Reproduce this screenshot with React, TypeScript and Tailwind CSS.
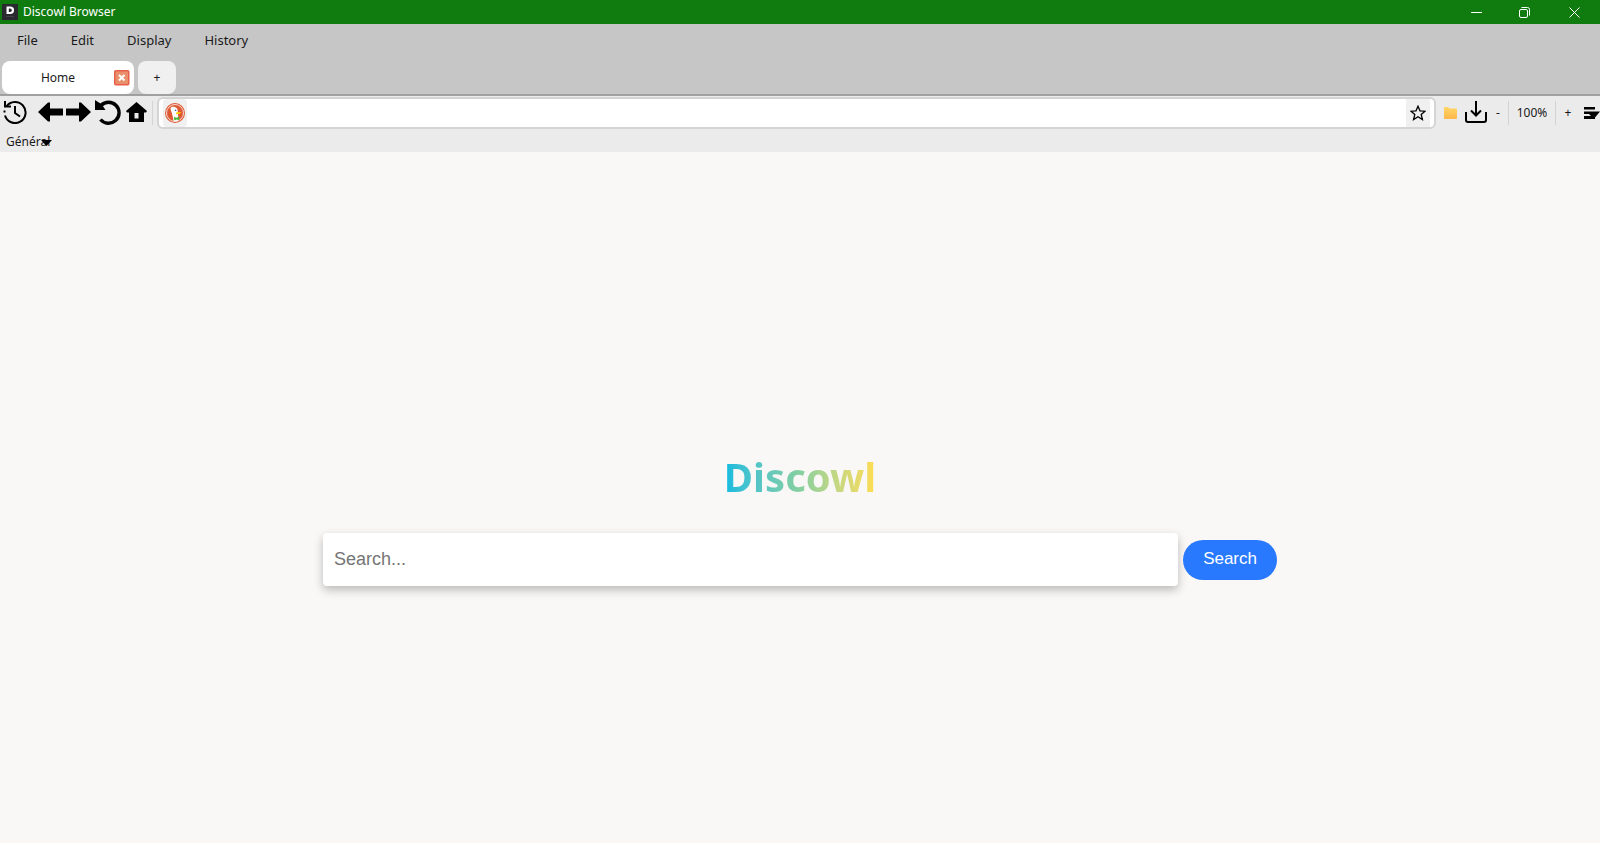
import type { ReactNode } from "react";

const menus = ["File", "Edit", "Display", "History"];

function IconButton({ label, className = "", children }: { label: string; className?: string; children: ReactNode }) {
  return (
    <button type="button" aria-label={label} title={label} className={`flex shrink-0 items-center justify-center ${className}`}>
      {children}
    </button>
  );
}

function AppLogo() {
  return (
    <svg width="16" height="16" viewBox="0 0 16 16" aria-hidden="true">
      <rect width="16" height="16" fill="#2b2930" />
      <path d="M4.500 2.500h3.800a3.600 3.600 0 0 1 0 7.500H4.500zM6.800 4.500v3.500h1.300a1.700 1.700 0 0 0 0-3.500z" fill="#fff" fillRule="evenodd" />
      <path d="M4 12.500h8" stroke="#45424a" />
    </svg>
  );
}

function TitleBar() {
  return (
    <header className="flex h-6 items-center bg-[#107c10] pl-0.5 text-white">
      <AppLogo />
      <span className="ml-[5px] text-xs">Discowl Browser</span>
      <div className="ml-auto flex h-full">
        <IconButton label="Minimize" className="w-12">
          <svg width="11" height="11" fill="none" stroke="currentColor">
            <path d="M0 5.500h11" />
          </svg>
        </IconButton>
        <IconButton label="Restore" className="w-12">
          <svg width="11" height="11" fill="none" stroke="currentColor">
            <rect x=".5" y="2.500" width="8" height="8" rx="1.500" />
            <path d="M2.500 .5h6a2 2 0 0 1 2 2v6" />
          </svg>
        </IconButton>
        <IconButton label="Close" className="w-13">
          <svg width="11" height="11" fill="none" stroke="currentColor">
            <path d="M.5 .5l10 10M10.500 .5l-10 10" />
          </svg>
        </IconButton>
      </div>
    </header>
  );
}

function Tabs() {
  return (
    <div className="flex h-[35px] items-start gap-1 border-b-2 border-[#a0a0a0] bg-[#c6c6c6] pl-0.5">
      <div className="flex h-[33px] w-33 items-center rounded-lg bg-white pr-1">
        <button type="button" className="flex-1 text-center">Home</button>
        <IconButton label="Close tab">
          <svg width="16" height="16" viewBox="0 0 16 16">
            <rect x=".75" y=".75" width="14" height="14" rx="1" fill="#e9906a" stroke="#e8604c" strokeWidth="1.500" />
            <path d="M5 5l5.500 5.500M10.500 5L5 10.500" stroke="#fff" strokeWidth="2" />
          </svg>
        </IconButton>
      </div>
      <button type="button" aria-label="New tab" className="h-[33px] w-[38px] rounded-lg bg-[#f0f0f0]">+</button>
    </div>
  );
}

function DuckIcon() {
  return (
    <svg width="20" height="20" viewBox="0 0 20 20">
      <circle cx="10" cy="10" r="10" fill="#de5833" />
      <circle cx="10" cy="10" r="8.500" fill="none" stroke="#fff" strokeWidth=".8" />
      <path d="M5.500 5.500C5.500 3.800 7.500 3.400 9 3.800c3 .4 4 2.700 3.800 5.200l.2 3 .8 5.200c-1.500 1-4 1.200-5.300 .8C8 15 7.600 12.500 7 10.500 6.300 8.500 5.600 7 5.500 5.500z" fill="#fff" />
      <path d="M11 9.500c1.500-.8 4-.8 5.500 0-1 1.200-3 1.700-5.500 1.700z" fill="#fdd20a" />
      <path d="M8.800 13.800l2.700 1 2.700-1.300v3.700l-2.700-.7-2.200 .9z" fill="#4cba3c" />
      <circle cx="10.600" cy="7.300" r=".8" fill="#2d4f8e" />
    </svg>
  );
}

function Toolbar() {
  return (
    <div className="flex h-[34px] items-center">
      <IconButton label="History" className="w-8 pr-0.5 pb-0.5">
        <svg width="24" height="24" viewBox="0 0 24 24" fill="none" stroke="#000" strokeWidth="2">
          <path d="M2 15.500A10.500 10.500 0 1 0 3.500 6.500M.5 11.500h2" />
          <path d="M2 1v5.500h6M12 6v7l5 3.500" />
        </svg>
      </IconButton>
      <IconButton label="Back" className="ml-1 w-7 pb-0.5">
        <svg width="25" height="20" viewBox="0 0 25 20">
          <path d="M0 10L10 .5h2V6.500h13v7H12v6h-2z" />
        </svg>
      </IconButton>
      <IconButton label="Forward" className="w-7 pb-0.5">
        <svg width="25" height="20" viewBox="0 0 25 20">
          <path d="M25 10L15 .5h-2V6.500H0v7h13v6h2z" />
        </svg>
      </IconButton>
      <IconButton label="Reload" className="w-8 pb-0.5">
        <svg width="26" height="26" viewBox="0 0 26 26">
          <path d="M6 6.500A10.500 10.500 0 1 1 5.500 20.500" fill="none" stroke="#000" strokeWidth="3.400" />
          <path d="M0 1l3 2 3.500 2 4 6H0z" />
        </svg>
      </IconButton>
      <IconButton label="Home" className="w-6 pb-0.5">
        <svg width="21" height="20" viewBox="0 0 21 20">
          <path d="M10.500 0L21 9l-1 1.500h-2V20H3v-9.500H1L0 9zM8.500 11v5.500h4V11z" fillRule="evenodd" />
        </svg>
      </IconButton>
      <span className="ml-1 h-6 w-px bg-[#d4d4d4]" />
      <div className="ml-1 flex h-8 flex-1 items-center rounded-md border-2 border-[#d4d4d4] bg-white px-1">
        <IconButton label="Search engine" className="h-7 w-6 rounded bg-[#f0f0f0]">
          <DuckIcon />
        </IconButton>
        <input aria-label="Address" className="h-full min-w-0 flex-1 px-2 outline-none" />
        <IconButton label="Add bookmark" className="h-7 w-6 bg-[#f0f0f0]">
          <svg width="16" height="16" viewBox="0 0 16 16" fill="none" stroke="#000" strokeWidth="1.300">
            <path d="M8 1.200l2 4.600 5 .4-3.800 3.300L12.400 14.500 8 11.800 3.600 14.500l1.200-5L1 6.200l5-.4z" />
          </svg>
        </IconButton>
      </div>
      <IconButton label="Bookmarks" className="ml-1.5 w-4">
        <svg width="13" height="12" viewBox="0 0 13 12">
          <defs>
            <linearGradient id="folder" x2="0" y2="1">
              <stop stopColor="#ffd766" />
              <stop offset="1" stopColor="#ffb64a" />
            </linearGradient>
          </defs>
          <path d="M0 1q0-1 1-1h3l1.500 1.500H12q1 0 1 1V11q0 1-1 1H1q-1 0-1-1z" fill="url(#folder)" />
        </svg>
      </IconButton>
      <IconButton label="Downloads" className="ml-0.5 w-8 pb-0.5">
        <svg width="22" height="22" viewBox="0 0 22 22" fill="none" stroke="#000" strokeWidth="2">
          <path d="M11 0v14M6 9.500l5 5 5-5M1 11v8q0 2 2 2h16q2 0 2-2v-8" />
        </svg>
      </IconButton>
      <button type="button" aria-label="Zoom out" className="w-3">-</button>
      <span className="ml-1 h-6 w-px bg-[#d4d4d4]" />
      <output className="w-[46px] text-center">100%</output>
      <span className="h-6 w-px bg-[#d4d4d4]" />
      <button type="button" aria-label="Zoom in" className="w-6">+</button>
      <IconButton label="Menu" className="ml-1 w-4">
        <svg width="16" height="12" viewBox="0 0 16 12">
          <path d="M0 0h11v2.500H0zM0 4.500h16l-5 6V12H0V9h7L5 7H0z" />
        </svg>
      </IconButton>
    </div>
  );
}

export default function App() {
  return (
    <div className="flex min-h-screen flex-col bg-[#f9f8f7] font-['Noto_Sans',sans-serif] text-xs text-[#1a1a1a]">
      <TitleBar />
      <nav className="flex h-[37px] items-center gap-[33px] bg-[#c6c6c6] pb-1 pl-[17px] text-[13px]">
        {menus.map((m) => (
          <button key={m} type="button">{m}</button>
        ))}
      </nav>
      <Tabs />
      <div className="bg-[#ebebeb]">
        <Toolbar />
        <div className="flex h-[22px] items-center pt-0.5 pl-1.5">
          <button type="button" className="relative">
            Général
            <svg className="absolute top-1.5 -right-0.5" width="11" height="6" viewBox="0 0 11 6" aria-hidden="true">
              <path d="M0 0h11L5.500 6z" />
            </svg>
          </button>
        </div>
      </div>
      <main className="flex flex-1 flex-col items-center justify-center pt-10">
        <h1 className="bg-linear-to-r from-[#08bbe0] via-[#85d09f] to-[#ffdc50] bg-clip-text text-[40px] leading-14 font-bold text-transparent">Discowl</h1>
        <form className="mt-7 flex w-3/5 items-center gap-[5px] px-[3px]" onSubmit={(e) => e.preventDefault()}>
          <input
            type="text"
            aria-label="Search the web"
            placeholder="Search..."
            className="h-[53px] min-w-0 flex-1 rounded bg-white px-[11px] font-['Liberation_Sans',sans-serif] text-lg shadow-[0_4px_10px_rgba(0,0,0,0.25)] outline-none placeholder:text-[#757575]"
          />
          <button type="submit" className="h-10 rounded-full bg-[#2979ff] px-5 font-['Liberation_Sans',sans-serif] text-[17px] text-white">
            Search
          </button>
        </form>
      </main>
    </div>
  );
}
